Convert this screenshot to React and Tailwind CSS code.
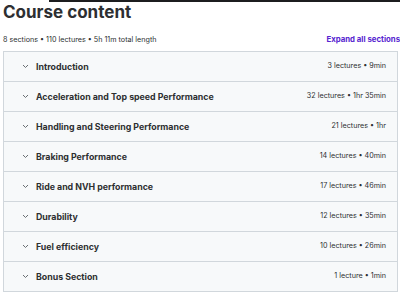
import React from "react";

const rows = [
  ["Introduction", "3 lectures • 9min"],
  ["Acceleration and Top speed Performance", "32 lectures • 1hr 35min"],
  ["Handling and Steering Performance", "21 lectures • 1hr"],
  ["Braking Performance", "14 lectures • 40min"],
  ["Ride and NVH performance", "17 lectures • 46min"],
  ["Durability", "12 lectures • 35min"],
  ["Fuel efficiency", "10 lectures • 26min"],
  ["Bonus Section", "1 lecture • 1min"],
];

function Chevron() {
  return (
    <svg width="7" height="5" viewBox="0 0 7 5" className="shrink-0">
      <path d="M1 1 L3.5 3.5 L6 1" fill="none" stroke="#6a6f73" strokeWidth="1" />
    </svg>
  );
}

export default function App() {
  return (
    <div className="w-[400px] h-[292px] overflow-hidden bg-white relative text-[#2d2f31]" style={{ fontFamily: "Inter, 'Noto Sans', sans-serif" }}>
      <div className="absolute left-[49px] top-0 right-0 h-[2px] bg-[#1c1d1f]" />
      <div className="pl-[3px] pt-[2px] text-[17px] leading-[20px] font-bold">Course content</div>
      <div className="flex items-center justify-between pl-[3px] mt-[12px] h-[12px]">
        <span className="text-[7.2px] text-[#2d2f31]">8 sections • 110 lectures • 5h 11m total length</span>
        <span className="text-[7.8px] font-bold text-[#5624d0] whitespace-nowrap">Expand all sections</span>
      </div>
      <div className="ml-[3px] mr-[2px] mt-[5px] border border-[#d1d7dc]">
        {rows.map(([t, m], i) => (
          <div key={i} className={`h-[29px] flex items-center bg-[#f7f9fa] pl-[18px] pr-[11px] ${i > 0 ? "border-t border-[#d1d7dc] box-content" : ""}`}>
            <Chevron />
            <span className="ml-[7px] text-[8.8px] font-bold flex-1">{t}</span>
            <span className="text-[7.2px] text-[#2d2f31]">{m}</span>
          </div>
        ))}
      </div>
    </div>
  );
}
